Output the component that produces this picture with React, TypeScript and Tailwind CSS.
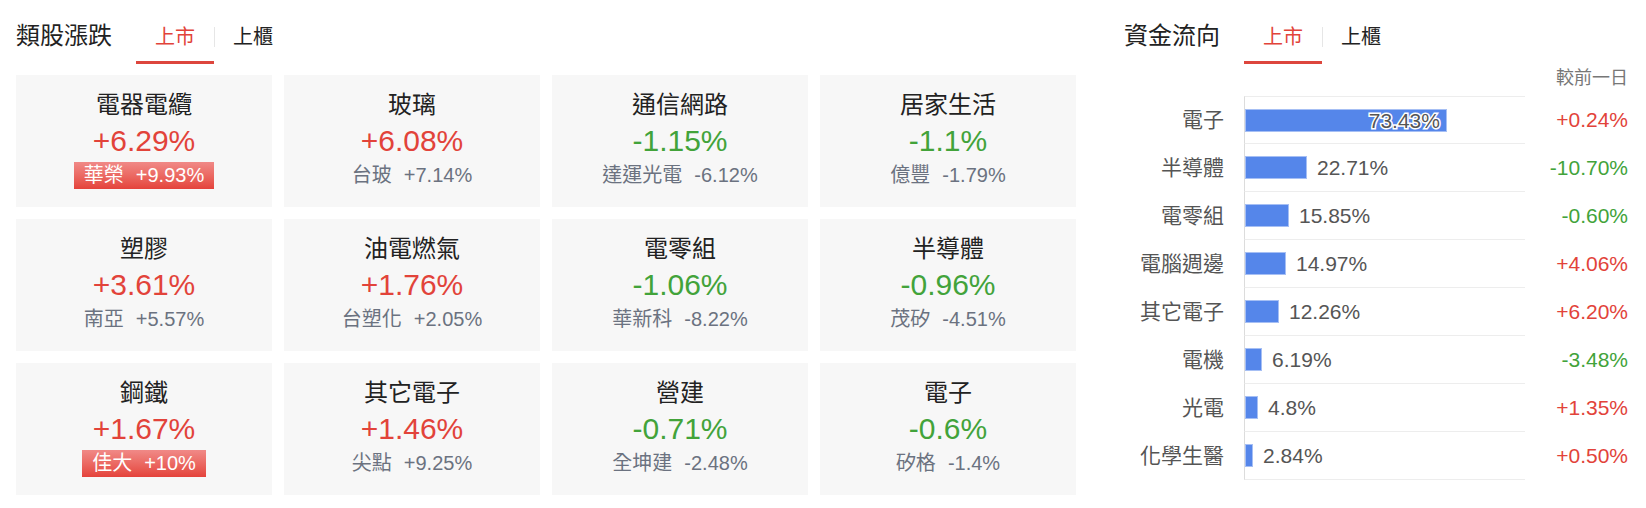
import React from "react";

type Sector = {
  name: string;
  change: number;
  leader: string;
  leaderChange: string;
  limitUp?: boolean;
};

const sectors: Sector[] = [
  { name: "電器電纜", change: 6.29, leader: "華榮", leaderChange: "+9.93%", limitUp: true },
  { name: "玻璃", change: 6.08, leader: "台玻", leaderChange: "+7.14%" },
  { name: "通信網路", change: -1.15, leader: "達運光電", leaderChange: "-6.12%" },
  { name: "居家生活", change: -1.1, leader: "億豐", leaderChange: "-1.79%" },
  { name: "塑膠", change: 3.61, leader: "南亞", leaderChange: "+5.57%" },
  { name: "油電燃氣", change: 1.76, leader: "台塑化", leaderChange: "+2.05%" },
  { name: "電零組", change: -1.06, leader: "華新科", leaderChange: "-8.22%" },
  { name: "半導體", change: -0.96, leader: "茂矽", leaderChange: "-4.51%" },
  { name: "鋼鐵", change: 1.67, leader: "佳大", leaderChange: "+10%", limitUp: true },
  { name: "其它電子", change: 1.46, leader: "尖點", leaderChange: "+9.25%" },
  { name: "營建", change: -0.71, leader: "全坤建", leaderChange: "-2.48%" },
  { name: "電子", change: -0.6, leader: "矽格", leaderChange: "-1.4%" },
];

const flows = [
  { name: "電子", share: 73.43, diff: "+0.24%" },
  { name: "半導體", share: 22.71, diff: "-10.70%" },
  { name: "電零組", share: 15.85, diff: "-0.60%" },
  { name: "電腦週邊", share: 14.97, diff: "+4.06%" },
  { name: "其它電子", share: 12.26, diff: "+6.20%" },
  { name: "電機", share: 6.19, diff: "-3.48%" },
  { name: "光電", share: 4.8, diff: "+1.35%" },
  { name: "化學生醫", share: 2.84, diff: "+0.50%" },
];

const UP = "text-[#e2433a]";
const DOWN = "text-[#42a33a]";

// px per percent on the flow chart track
const BAR_SCALE = 2.75;

const fmt = (n: number) => (n > 0 ? `+${n}%` : `${n}%`);

const Header = ({ title }: { title: string }) => {
  return (
    <div className="flex h-16">
      <div className="pt-[22px] text-[24px] leading-[28px] text-[#222]">{title}</div>
      <div className="ml-6 flex h-full">
        <div className="w-[78px] h-full border-b-[3px] border-[#dd463d] pt-[25px] text-center text-[20px] leading-[24px] text-[#e2433a]">
          上市
        </div>
        <div className="mt-[27px] h-[20px] w-px bg-[#e6e6e6]" />
        <div className="h-full pl-[18px] pr-[18px] pt-[25px] text-[20px] leading-[24px] text-[#222]">
          上櫃
        </div>
      </div>
    </div>
  );
};

const SectorCard = ({ s }: { s: Sector }) => {
  const color = s.change > 0 ? UP : DOWN;
  return (
    <div className="h-[132px] bg-[#f7f7f7] flex flex-col items-center pt-[14px]">
      <div className="text-[24px] leading-[32px] text-[#222]">{s.name}</div>
      <div className={`text-[30px] leading-[40px] ${color}`}>{fmt(s.change)}</div>
      <div className="h-[28px] flex items-center">
        {s.limitUp ? (
          <span className="flex h-[27px] items-center gap-3 px-[10px] bg-gradient-to-b from-[#f08987] to-[#e4423b] text-[20px] leading-none text-white">
            <span>{s.leader}</span>
            <span>{s.leaderChange}</span>
          </span>
        ) : (
          <span className="flex items-center gap-3 text-[20px] leading-none text-[#6b7280]">
            <span>{s.leader}</span>
            <span>{s.leaderChange}</span>
          </span>
        )}
      </div>
    </div>
  );
};

const FlowRow = ({ f, first }: { f: (typeof flows)[number]; first: boolean }) => {
  const width = Math.round(f.share * BAR_SCALE);
  const inside = width > 120;
  const diffColor = f.diff.startsWith("+") ? UP : DOWN;
  return (
    <div className="flex h-12 items-center">
      <div className="w-[100px] text-right text-[21px] text-[#555]">{f.name}</div>
      <div
        className={`ml-5 flex h-full w-[281px] items-center border-l border-b border-l-[#dcdcdc] border-b-[#ededed] ${
          first ? "border-t border-t-[#ededed]" : ""
        }`}
      >
        <div
          className="h-[23px] border border-[#a6bff4] bg-[#5586ea] flex items-center justify-end pr-[6px]"
          style={{ width: `${width}px` }}
        >
          {inside && (
            <span className="text-[21px] leading-none text-[#555] [paint-order:stroke_fill] [-webkit-text-stroke:3px_white]">
              {f.share}%
            </span>
          )}
        </div>
        {!inside && <span className="ml-[10px] text-[21px] leading-none text-[#555]">{f.share}%</span>}
      </div>
      <div className={`flex-1 text-right text-[21px] ${diffColor}`}>{f.diff}</div>
    </div>
  );
};

export default function App() {
  return (
    <div
      className="flex h-[508px] w-[1646px] bg-white pl-4 pr-[18px]"
      style={{ fontFamily: '"Liberation Sans", "Noto Sans CJK TC", sans-serif' }}
    >
      <div className="w-[1060px]">
        <Header title="類股漲跌" />
        <div className="mt-[11px] grid grid-cols-4 gap-3">
          {sectors.map((s) => (
            <SectorCard key={s.name} s={s} />
          ))}
        </div>
      </div>

      <div className="ml-12 flex-1">
        <Header title="資金流向" />
        <div className="mt-1 h-[20px] text-right text-[18px] leading-[20px] text-[#777]">較前一日</div>
        <div className="mt-[8px]">
          {flows.map((f, i) => (
            <FlowRow key={f.name} f={f} first={i === 0} />
          ))}
        </div>
      </div>
    </div>
  );
}
